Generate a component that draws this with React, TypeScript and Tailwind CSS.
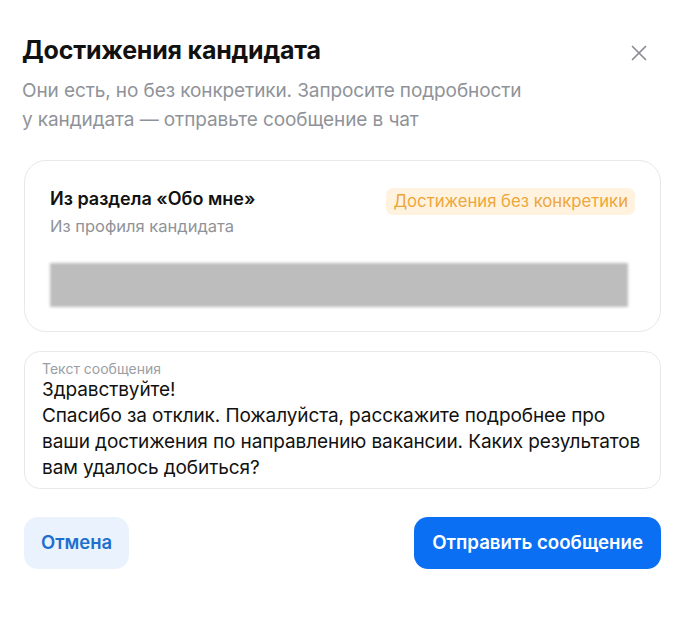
import { X } from 'lucide-react';

export default function App() {
  return (
    <div className="min-h-[633px] w-[686px] bg-white font-['Inter',sans-serif] text-[#1a1a1a]">
      <div className="px-6 pt-[34px]">
        <div className="flex items-start justify-between">
          <h1 className="-ml-[2px] text-[25px] font-bold leading-[32px] tracking-[-0.2px] text-[#111]">Достижения кандидата</h1>
          <button className="mr-[10px] mt-[6px] text-[#8a8d93]">
            <X size={26} strokeWidth={1.6} />
          </button>
        </div>
        <p className="-ml-[2px] mt-[10px] text-[19px] leading-[29px] tracking-[-0.1px] text-[#8f9399]">
          Они есть, но без конкретики. Запросите подробности
          <br />
          у кандидата — отправьте сообщение в чат
        </p>

        {/* карточка из профиля */}
        <div className="mt-[26px] mr-[1px] rounded-[22px] border border-[#e6e8eb] px-[25px] pt-[25px] pb-[24px]">
          <div className="flex items-start justify-between">
            <div>
              <p className="text-[18px] font-semibold leading-[26px] text-[#111]">Из раздела «Обо мне»</p>
              <p className="mt-[3px] text-[16.5px] leading-[22px] text-[#8f9399]">Из профиля кандидата</p>
            </div>
            <span className="mt-[2px] rounded-[7px] bg-[#fff3e0] px-[7px] py-[2px] text-[16.7px] leading-[23px] text-[#eda63a]">
              Достижения без конкретики
            </span>
          </div>
          <div className="mt-[26px] mr-[7px] h-[44px] bg-[#bdbdbd] blur-[1.5px]" />
        </div>

        {/* поле сообщения */}
        <div className="mt-[19px] mr-[1px] rounded-[16px] border border-[#e6e8eb] pl-[17px] pr-[8px] pt-[9px] pb-[7px]">
          <p className="text-[14px] leading-[16px] text-[#9a9ea4]">Текст сообщения</p>
          <p className="whitespace-nowrap text-[19px] leading-[26px] tracking-[-0.1px] text-[#111]">
            Здравствуйте!
            <br />
            Спасибо за отклик. Пожалуйста, расскажите подробнее про
            <br />
            ваши достижения по направлению вакансии. Каких результатов
            <br />
            вам удалось добиться?
          </p>
        </div>

        <div className="mt-[28px] mr-[1px] flex items-center justify-between">
          <button className="h-[52px] rounded-[14px] bg-[#eaf3fd] px-[17px] text-[18.5px] font-semibold text-[#1f6fcf]">
            Отмена
          </button>
          <button className="h-[52px] rounded-[14px] bg-[#0a6ff2] px-[18px] text-[18.7px] font-semibold text-white">
            Отправить сообщение
          </button>
        </div>
      </div>
    </div>
  );
}
